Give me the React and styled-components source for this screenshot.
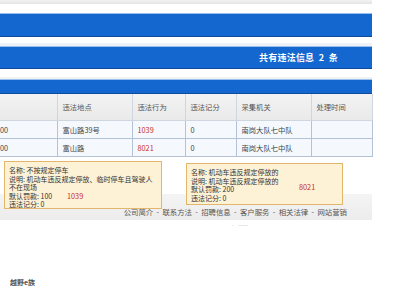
import React from "react";
import styled, { createGlobalStyle } from "styled-components";

const Global = createGlobalStyle`
  html, body { margin: 0; padding: 0; background: #fff; }
  body { font-family: "Noto Sans CJK SC", "Noto Sans", sans-serif; }
`;

const Page = styled.div`
  position: relative;
  width: 400px;
  height: 300px;
  overflow: hidden;
  background: #fff;
`;

const Column = styled.div`
  width: 372px;
  display: flex;
  flex-direction: column;
`;

const TopStrip = styled.div`
  height: 4px;
  background: linear-gradient(#f2f2f2, #e4e4e4);
`;

const Spacer = styled.div`
  height: ${(p) => p.h}px;
  background: ${(p) => p.bg || "#fff"};
`;

const BlueBar = styled.div`
  height: ${(p) => p.h}px;
  background: #1467cf;
  border-top: 1px solid #9cc0ec;
  border-bottom: 1px solid #0f4a9c;
  display: flex;
  align-items: center;
  justify-content: flex-end;
  padding-right: 34px;
  color: #fff;
  font-weight: 700;
  font-size: 9px;
  letter-spacing: 0.2px;
  white-space: pre;
`;

const Table = styled.table`
  border-collapse: collapse;
  table-layout: fixed;
  width: 372px;
  font-size: 7.3px;
`;

const HeadCell = styled.th`
  height: 26px;
  padding: 0 0 0 5px;
  text-align: left;
  font-weight: 400;
  color: #555;
  background: linear-gradient(#f3f3f3, #e9e9e9);
  border: 1px solid #cfd6df;
  border-top: none;
  &:first-child { border-left: none; }
`;

const Cell = styled.td`
  height: 17px;
  padding: 0 0 0 ${(p) => (p.first ? 0 : 5)}px;
  color: ${(p) => (p.red ? "#c8302c" : "#444")};
  background: #f5f8fc;
  border: 1px solid #b3c2d6;
  white-space: nowrap;
  overflow: hidden;
  &:first-child { border-left: none; }
`;

const FooterBand = styled.div`
  height: 23px;
  background: linear-gradient(#f4f4f4, #ececec);
  display: flex;
  align-items: flex-end;
  justify-content: flex-end;
  padding: 0 25px 3px 0;
  font-size: 7.4px;
  color: #555;
  white-space: pre;
`;

const FaintLine = styled.div`
  height: 10px;
  padding-left: 232px;
  font-size: 6px;
  color: #d8d8d8;
  white-space: pre;
`;

const Brand = styled.div`
  margin-top: 47px;
  padding-left: 10px;
  font-size: 7px;
  font-weight: 700;
  color: #555;
`;

const Tip = styled.div`
  position: absolute;
  left: ${(p) => p.x}px;
  top: ${(p) => p.y}px;
  width: ${(p) => p.w}px;
  height: ${(p) => p.h}px;
  box-sizing: border-box;
  background: #fdf1d6;
  border: 1px solid #e2b66b;
  padding: 4px 4px 0 4px;
  font-size: 7px;
  line-height: 8.6px;
  color: #333;
`;

const TipCode = styled.span`
  position: absolute;
  left: ${(p) => p.x}px;
  top: ${(p) => p.y}px;
  color: #c8302c;
  font-size: 7.3px;
  line-height: 8.6px;
`;

const headers = ["", "违法地点", "违法行为", "违法记分", "采集机关", "处理时间"];
const widths = [57, 75, 53, 51, 75, 61];
const rows = [
  ["00", "富山路39号", "1039", "0", "南岗大队七中队", ""],
  ["00", "富山路", "8021", "0", "南岗大队七中队", ""],
];

const links = ["公司简介", "联系方法", "招聘信息", "客户服务", "相关法律", "网站营销"];

export default function App() {
  return (
    <Page>
      <Global />
      <Column>
        <TopStrip />
        <Spacer h={9} />
        <BlueBar h={22} />
        <Spacer h={6} />
        <Spacer h={3} bg="#eef1f5" />
        <BlueBar h={21}>共有违法信息  2  条</BlueBar>
        <Spacer h={8} />
        <Spacer h={2} bg="#eef1f5" />
        <BlueBar h={13} />
        <Table>
          <colgroup>
            {widths.map((w, i) => (
              <col key={i} style={{ width: w }} />
            ))}
          </colgroup>
          <thead>
            <tr>
              {headers.map((h, i) => (
                <HeadCell key={i}>{h}</HeadCell>
              ))}
            </tr>
          </thead>
          <tbody>
            {rows.map((r, ri) => (
              <tr key={ri}>
                {r.map((c, ci) => (
                  <Cell key={ci} first={ci === 0} red={ci === 2}>
                    {c}
                  </Cell>
                ))}
              </tr>
            ))}
          </tbody>
        </Table>
        <Spacer h={37} />
        <FooterBand>{links.join("  -  ")}</FooterBand>
        <FaintLine>-   ——</FaintLine>
        <Brand>越野e族</Brand>
      </Column>
      <Tip x={4} y={161} w={158} h={48}>
        名称: 不按规定停车
        <br />
        说明: 机动车违反规定停放、临时停车且驾驶人
        <br />
        不在现场
        <br />
        默认罚款: 100
        <br />
        违法记分: 0
        <TipCode x={62} y={30}>1039</TipCode>
      </Tip>
      <Tip x={186} y={163} w={157} h={42}>
        名称: 机动车违反规定停放的
        <br />
        说明: 机动车违反规定停放的
        <br />
        默认罚款: 200
        <br />
        违法记分: 0
        <TipCode x={112} y={19}>8021</TipCode>
      </Tip>
    </Page>
  );
}
